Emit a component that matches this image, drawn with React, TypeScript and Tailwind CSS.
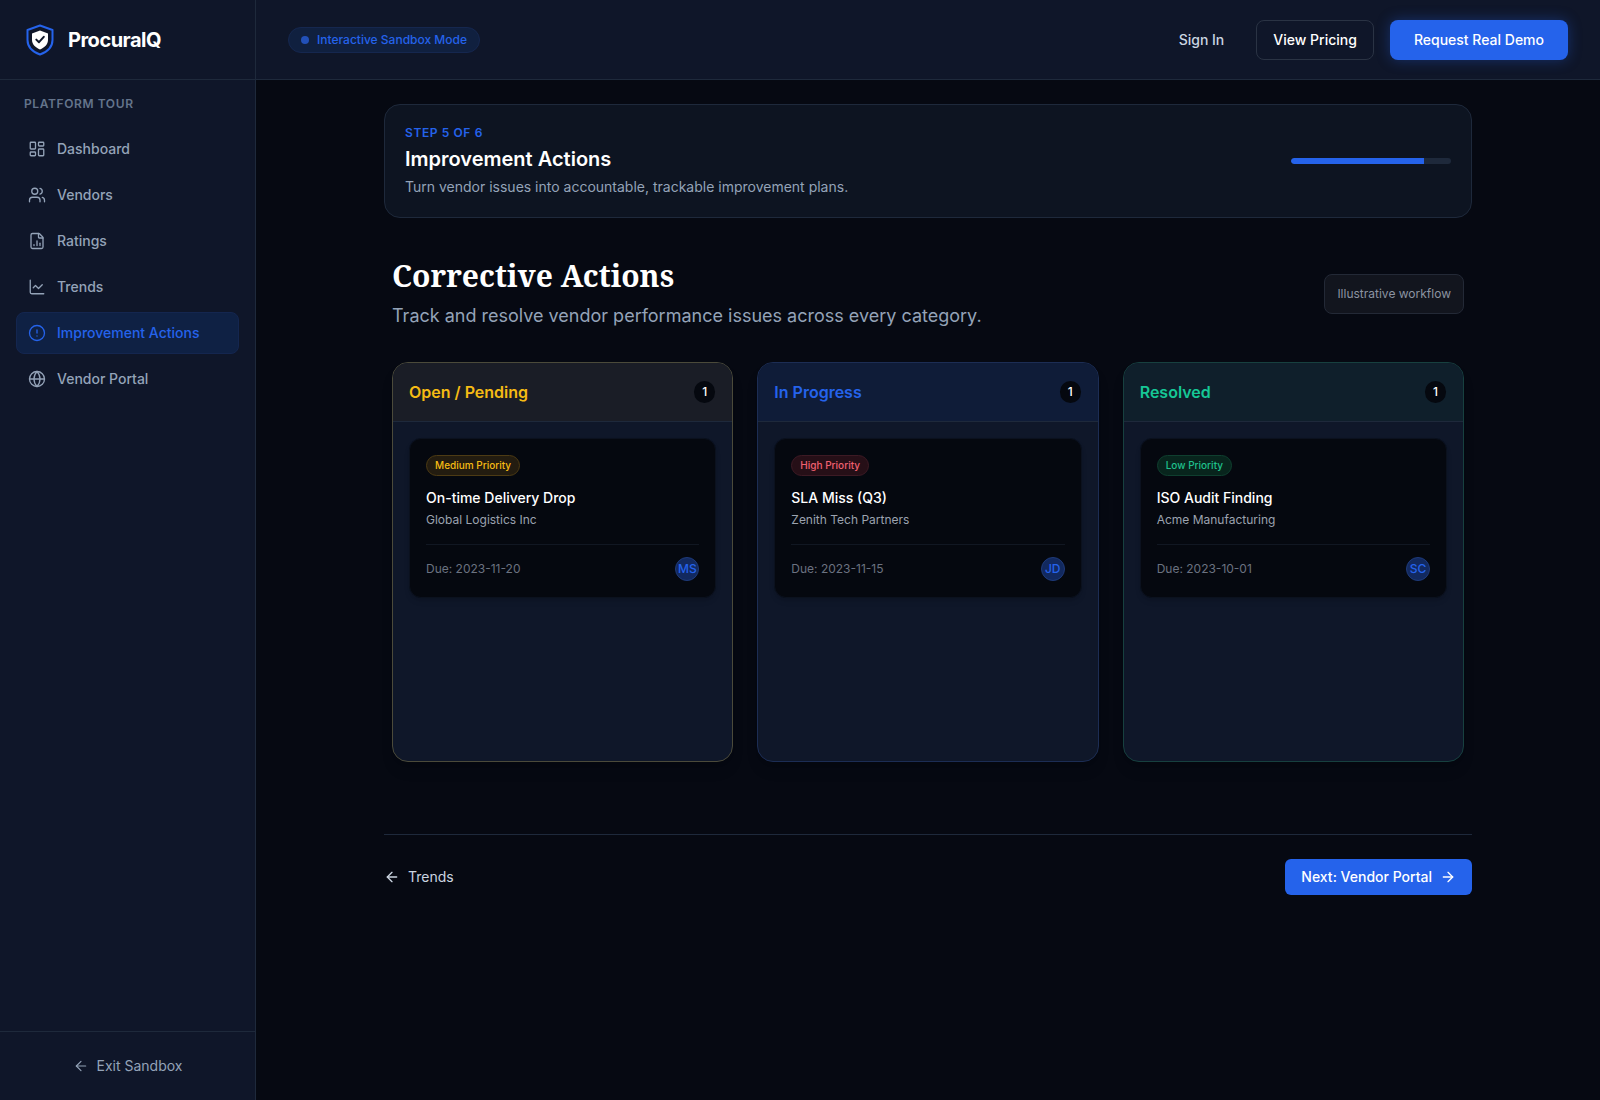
import React from "react";
import { LayoutDashboard, Users, FileChartColumn, ChartLine, CircleAlert, Globe, ArrowLeft, ArrowRight } from "lucide-react";

const nav = [
  { label: "Dashboard", Icon: LayoutDashboard },
  { label: "Vendors", Icon: Users },
  { label: "Ratings", Icon: FileChartColumn },
  { label: "Trends", Icon: ChartLine },
  { label: "Improvement Actions", Icon: CircleAlert, active: true },
  { label: "Vendor Portal", Icon: Globe },
];

function Logo() {
  return (
    <svg width="28" height="32" viewBox="0 0 28 32" fill="none" className="shrink-0">
      <path d="M14 1.5 L26.5 6 V16 C26.5 23 21 28 14 30.5 C7 28 1.5 23 1.5 16 V6 Z" stroke="#2563eb" strokeWidth="2" strokeLinejoin="round" />
      <path d="M14 6.5 L22 9.5 V16 C22 20.5 18.5 23.5 14 25.5 C9.5 23.5 6 20.5 6 16 V9.5 Z" fill="#ffffff" />
      <path d="M10.3 15.6 L13 18.2 L17.8 12.8" stroke="#0f172a" strokeWidth="2" strokeLinecap="round" strokeLinejoin="round" />
    </svg>
  );
}

function Column(props: {
  title: string; titleCls: string; borderCls: string; headCls: string;
  badge: string; badgeCls: string; name: string; vendor: string; due: string; who: string;
}) {
  return (
    <div className={`flex h-[400px] flex-col overflow-hidden rounded-2xl border bg-[#0f1729] shadow-lg ${props.borderCls}`}>
      <div className={`flex h-[59px] items-center justify-between border-b border-[#1e293b] pr-[17px] pl-4 ${props.headCls}`}>
        <span className={`text-base font-semibold ${props.titleCls}`}>{props.title}</span>
        <span className="rounded-full bg-[#05080f] px-2 py-[3px] text-xs font-medium text-white">1</span>
      </div>
      <div className="p-4">
        <div className="rounded-xl border border-[#0b111e] bg-[#05080f] p-4 shadow-md">
          <span className={`block w-fit rounded-full border px-2 py-[3px] text-[10px] leading-[13px] font-medium ${props.badgeCls}`}>{props.badge}</span>
          <div className="mt-3 text-sm font-medium text-white">{props.name}</div>
          <div className="mt-1 text-xs text-[#9ca3af]">{props.vendor}</div>
          <div className="mt-4 flex items-center justify-between border-t border-[#111722] pt-3">
            <span className="text-xs text-[#6b7280]">{props.due}</span>
            <span className="flex h-6 w-6 items-center justify-center rounded-full border border-[#1e3a7a] bg-[#12295f] text-xs font-medium text-[#2563eb]">{props.who}</span>
          </div>
        </div>
      </div>
    </div>
  );
}

export default function App() {
  return (
    <div className="flex h-[1100px] w-full overflow-hidden bg-[#060912] text-white [font-family:Inter,'Noto_Sans',sans-serif]">
      <aside className="flex w-64 shrink-0 flex-col border-r border-[#1e293b] bg-[#0f1629]">
        <div className="flex h-20 items-center gap-[14px] border-b border-[#1e293b] pl-[26px]">
          <Logo />
          <span className="text-xl font-bold tracking-tight text-white">ProcuralQ</span>
        </div>
        <div className="flex flex-1 flex-col px-4 pt-4">
          <div className="px-2 text-xs leading-4 font-semibold tracking-wider text-[#64748b]">PLATFORM TOUR</div>
          <nav className="mt-4 flex flex-col gap-1">
            {nav.map(({ label, Icon, active }) => (
              <div key={label} className={`flex h-[42px] items-center gap-[11px] rounded-lg border px-[11px] text-sm font-medium ${active ? "border-[#14264f] bg-[#0f2144] text-[#2563eb]" : "border-transparent text-[#94a3b8]"}`}>
                <Icon size={18} strokeWidth={1.75} />
                <span>{label}</span>
              </div>
            ))}
          </nav>
        </div>
        <div className="flex h-[69px] items-center justify-center gap-2 border-t border-[#1e293b] text-sm text-[#94a3b8]">
          <ArrowLeft size={16} strokeWidth={1.75} />
          <span>Exit Sandbox</span>
        </div>
      </aside>
      <div className="flex min-w-0 flex-1 flex-col">
        <header className="flex h-20 shrink-0 items-center justify-between border-b border-[#1e293b] bg-[#0f1629] px-8">
          <div className="flex h-[26px] items-center gap-2 rounded-full border border-[#15274f] bg-[#10203f] px-3 text-xs font-medium text-[#2563eb]">
            <span className="h-2 w-2 rounded-full bg-[#2250b8]" />
            Interactive Sandbox Mode
          </div>
          <div className="flex items-center gap-4">
            <span className="px-4 text-sm font-medium text-[#cbd5e1]">Sign In</span>
            <span className="flex h-10 items-center rounded-lg border border-[#2a3344] px-4 text-sm font-medium text-white">View Pricing</span>
            <span className="flex h-10 items-center rounded-lg bg-[#2563eb] px-6 text-sm font-medium text-white shadow-[0_0_14px_rgba(37,99,235,0.35)]">Request Real Demo</span>
          </div>
        </header>
        <main className="flex-1 px-8 py-6">
          <div className="mx-auto w-full max-w-[1088px]">
            <div className="flex h-[114px] items-center justify-between rounded-2xl border border-[#1e293b] bg-[#0d1421] px-5">
              <div>
                <div className="text-xs leading-4 font-semibold tracking-wider text-[#2563eb]">STEP 5 OF 6</div>
                <div className="mt-1 text-xl font-semibold text-white">Improvement Actions</div>
                <div className="mt-1 text-sm text-[#94a3b8]">Turn vendor issues into accountable, trackable improvement plans.</div>
              </div>
              <div className="h-[6px] w-40 overflow-hidden rounded-full bg-[#1e293b]">
                <div className="h-full w-[83.33%] rounded-l-full bg-[#2563eb]" />
              </div>
            </div>
            <div className="px-2">
              <div className="mt-[38px] flex items-center justify-between">
                <div>
                  <h1 className="text-3xl leading-10 font-bold text-white [font-family:'Noto_Serif','DejaVu_Serif',serif]">Corrective Actions</h1>
                  <p className="mt-[6px] text-lg text-[#94a3b8]">Track and resolve vendor performance issues across every category.</p>
                </div>
                <div className="mt-[2px] flex h-10 items-center rounded-lg border border-[#232936] bg-[#12151e] px-3 text-xs font-normal text-[#8b93a1]">Illustrative workflow</div>
              </div>
              <div className="mt-8 grid grid-cols-3 gap-6">
                <Column title="Open / Pending" titleCls="text-[#f5bb14]" borderCls="border-[#4b4a3a]" headCls="bg-[#1a1d26]" badge="Medium Priority" badgeCls="border-[#4d3b14] bg-[#231c10] text-[#f5bb14]" name="On-time Delivery Drop" vendor="Global Logistics Inc" due="Due: 2023-11-20" who="MS" />
                <Column title="In Progress" titleCls="text-[#2563eb]" borderCls="border-[#1c2d54]" headCls="bg-[#0f1c38]" badge="High Priority" badgeCls="border-[#3d1a24] bg-[#260f17] text-[#ef6070]" name="SLA Miss (Q3)" vendor="Zenith Tech Partners" due="Due: 2023-11-15" who="JD" />
                <Column title="Resolved" titleCls="text-[#16c796]" borderCls="border-[#17403f]" headCls="bg-[#0f1f2b]" badge="Low Priority" badgeCls="border-[#0f3f2f] bg-[#08251d] text-[#1fc08c]" name="ISO Audit Finding" vendor="Acme Manufacturing" due="Due: 2023-10-01" who="SC" />
              </div>
            </div>
            <div className="mt-[72px] flex items-center justify-between border-t border-[#1e293b] pt-6">
              <span className="flex items-center gap-2 text-sm text-[#cbd5e1]"><ArrowLeft size={16} />Trends</span>
              <span className="flex h-9 items-center gap-2 rounded-md bg-[#2563eb] px-4 text-sm font-medium text-white">Next: Vendor Portal<ArrowRight size={16} /></span>
            </div>
          </div>
        </main>
      </div>
    </div>
  );
}
